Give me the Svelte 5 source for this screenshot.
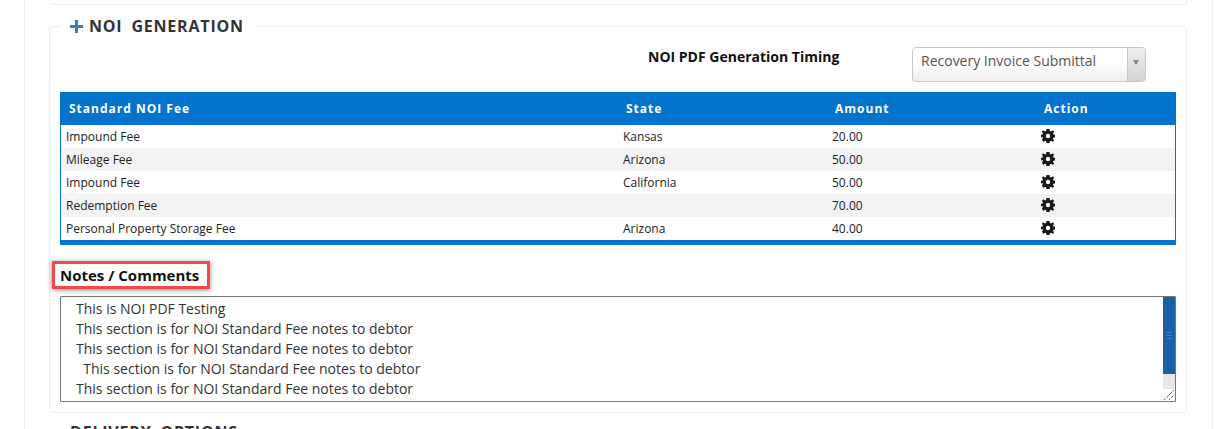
<script lang="ts">
  const fees = [
    { name: 'Impound Fee', state: 'Kansas', amount: '20.00' },
    { name: 'Mileage Fee', state: 'Arizona', amount: '50.00' },
    { name: 'Impound Fee', state: 'California', amount: '50.00' },
    { name: 'Redemption Fee', state: '', amount: '70.00' },
    { name: 'Personal Property Storage Fee', state: 'Arizona', amount: '40.00' },
  ]

  const notes = [
    'This is NOI PDF Testing',
    'This section is for NOI Standard Fee notes to debtor',
    'This section is for NOI Standard Fee notes to debtor',
    '  This section is for NOI Standard Fee notes to debtor',
    'This section is for NOI Standard Fee notes to debtor',
  ]

  // eight chunky teeth, small hole, like the font-awesome cog
  const cog =
    'M6.2 0h3.600l.4 2.300 1.200.5L13.300 1.500 15 3.200l-1.300 1.900.5 1.200L16 6.600v3l-1.800.4-.5 1.200 1.300 1.900-1.700 1.700-1.900-1.300-1.200.5-.4 2H6.200l-.4-2-1.200-.5-1.900 1.300L1 12.100l1.300-1.900-.5-1.200L0 9.600v-3l1.800-.3.5-1.200L1 3.200 2.700 1.500l1.900 1.300 1.200-.5z'
</script>

<div class="page">
  <div class="column">
    <div class="prev-panel"></div>

    <fieldset class="panel">
      <legend>
        <svg class="plus" viewBox="0 0 13 13" aria-hidden="true">
          <path d="M5 0h3v5h5v3H8v5H5V8H0V5h5z" />
        </svg>
        <span>NOI GENERATION</span>
      </legend>

      <div class="timing">
        <span class="timing-label">NOI PDF Generation Timing</span>
        <div class="select">
          <span class="select-value">Recovery Invoice Submittal</span>
          <span class="select-arrow"></span>
        </div>
      </div>

      <table class="fees">
        <thead>
          <tr>
            <th class="c-name">Standard NOI Fee</th>
            <th class="c-state">State</th>
            <th class="c-amount">Amount</th>
            <th class="c-action">Action</th>
          </tr>
        </thead>
        <tbody>
          {#each fees as fee}
            <tr>
              <td>{fee.name}</td>
              <td>{fee.state}</td>
              <td>{fee.amount}</td>
              <td>
                <svg class="gear" viewBox="0 0 16 16" aria-hidden="true">
                  <path fill-rule="evenodd" d="{cog} M8 5.500a2.500 2.500 0 1 0 0 5a2.500 2.500 0 0 0 0-5z" />
                </svg>
              </td>
            </tr>
          {/each}
        </tbody>
      </table>

      <div class="notes-head">
        <span class="notes-label">Notes / Comments</span>
      </div>

      <div class="notes">
        {#each notes as line}
          <div class="note-line">{line}</div>
        {/each}
        <div class="scrollbar">
          <div class="thumb"><span class="grip"></span></div>
          <div class="track"></div>
          <div class="resizer">
            <svg viewBox="0 0 12 12" aria-hidden="true">
              <path d="M1 11 11 1M6 11l5-5" stroke="#555" stroke-width="1" stroke-dasharray="1.400 .7" fill="none" />
            </svg>
          </div>
        </div>
      </div>
    </fieldset>

    <div class="next-title">DELIVERY OPTIONS</div>
  </div>
</div>

<style>
  :global(body) {
    background: #fff;
  }

  .page {
    height: 429px;
    overflow: hidden;
    font-family: 'Open Sans', 'Liberation Sans', sans-serif;
    color: #222;
  }

  .column {
    box-sizing: border-box;
    width: 1189px;
    min-height: 429px;
    margin-left: 24px;
    padding: 0 25px 0 24px;
    border-left: 1px solid #eee;
    border-right: 1px solid #eee;
  }

  .prev-panel {
    height: 4px;
    border: 1px solid #eee;
    border-top: 0;
    border-radius: 0 0 3px 3px;
  }

  .panel {
    box-sizing: border-box;
    height: 400px;
    margin: 8px 0 0;
    padding: 0 10px;
    border: 1px solid #eee;
    border-radius: 3px;
    min-width: 0;
  }

  legend {
    display: flex;
    align-items: center;
    height: 26px;
    padding: 0 10px;
    font-size: 16px;
    font-weight: 700;
    letter-spacing: 0.8px;
    word-spacing: 4px;
    color: #333;
    white-space: nowrap;
  }

  .plus {
    width: 13px;
    height: 13px;
    margin-right: 6px;
    fill: #3a7fb8;
  }

  .timing {
    display: flex;
    align-items: flex-start;
    height: 45px;
    padding: 8px 0 0 588px;
  }

  .timing-label {
    width: 264px;
    font-size: 14px;
    font-weight: 700;
    line-height: 19px;
    color: #111;
  }

  .select {
    box-sizing: border-box;
    display: flex;
    width: 234px;
    height: 35px;
    border: 1px solid #c8c8c8;
    border-radius: 4px;
    background: linear-gradient(#fff 40%, #eee);
  }

  .select-value {
    flex: 1;
    padding-left: 8px;
    font-size: 14px;
    line-height: 25px;
    color: #555;
  }

  .select-arrow {
    position: relative;
    width: 17px;
    border-left: 1px solid #c8c8c8;
    border-radius: 0 3px 3px 0;
    background: linear-gradient(#f0f0f0, #d2d2d2);
  }

  .select-arrow::after {
    content: '';
    position: absolute;
    left: 5px;
    top: 12px;
    border: 3px solid transparent;
    border-top: 5px solid #888;
    border-bottom: 0;
  }

  .fees {
    box-sizing: border-box;
    width: 1116px;
    border-collapse: collapse;
    table-layout: fixed;
    border: 1px solid #0473cb;
    border-width: 0 1px 5px;
  }

  th {
    height: 33px;
    padding: 0 0 0 8px;
    background: #0473cb;
    color: #fff;
    font-size: 12px;
    font-weight: 700;
    letter-spacing: 1px;
    text-align: left;
  }

  .c-name {
    width: 549px;
  }

  .c-state,
  .c-amount {
    width: 201px;
  }

  td {
    height: 23px;
    padding: 0 0 0 5px;
    font-size: 12px;
    color: #222;
  }

  tbody tr:nth-child(even) {
    background: #f3f3f3;
  }

  .gear {
    display: block;
    width: 14px;
    height: 14px;
    fill: #1a1a1a;
    margin-top: -1px;
  }

  .notes-head {
    height: 51px;
    padding-top: 16px;
    box-sizing: border-box;
    margin-left: -8px;
  }

  .notes-label {
    display: inline-block;
    box-sizing: border-box;
    width: 158px;
    height: 28px;
    padding-left: 5px;
    border: 3px solid #f2484b;
    box-shadow: 0 1px 5px rgba(0, 0, 0, 0.45);
    font-size: 15px;
    font-weight: 700;
    line-height: 22px;
    color: #111;
  }

  .notes {
    position: relative;
    box-sizing: border-box;
    width: 1116px;
    height: 106px;
    padding: 2px 0 0 15px;
    border: 1px solid #767676;
    border-radius: 1px;
    font-size: 14px;
    line-height: 20px;
    color: #333;
  }

  .note-line {
    white-space: pre;
  }

  .scrollbar {
    position: absolute;
    top: 0;
    right: 0;
    bottom: 0;
    width: 12px;
    display: flex;
    flex-direction: column;
  }

  .thumb {
    display: flex;
    align-items: center;
    justify-content: center;
    height: 77px;
    background: #1a5fa8;
  }

  .grip {
    width: 5px;
    height: 5px;
    border-top: 1px solid #4a85c2;
    border-bottom: 1px solid #4a85c2;
    background: linear-gradient(transparent 2px, #4a85c2 2px, #4a85c2 3px, transparent 3px);
  }

  .track {
    flex: 1;
    background: #e8e8e8;
  }

  .resizer {
    height: 12px;
    background: #fff;
  }

  .resizer svg {
    display: block;
    width: 12px;
    height: 12px;
  }

  .next-title {
    margin: 8px 0 0 21px;
    font-size: 16px;
    font-weight: 700;
    letter-spacing: 0.8px;
    word-spacing: 4px;
    color: #333;
    white-space: nowrap;
  }
</style>
